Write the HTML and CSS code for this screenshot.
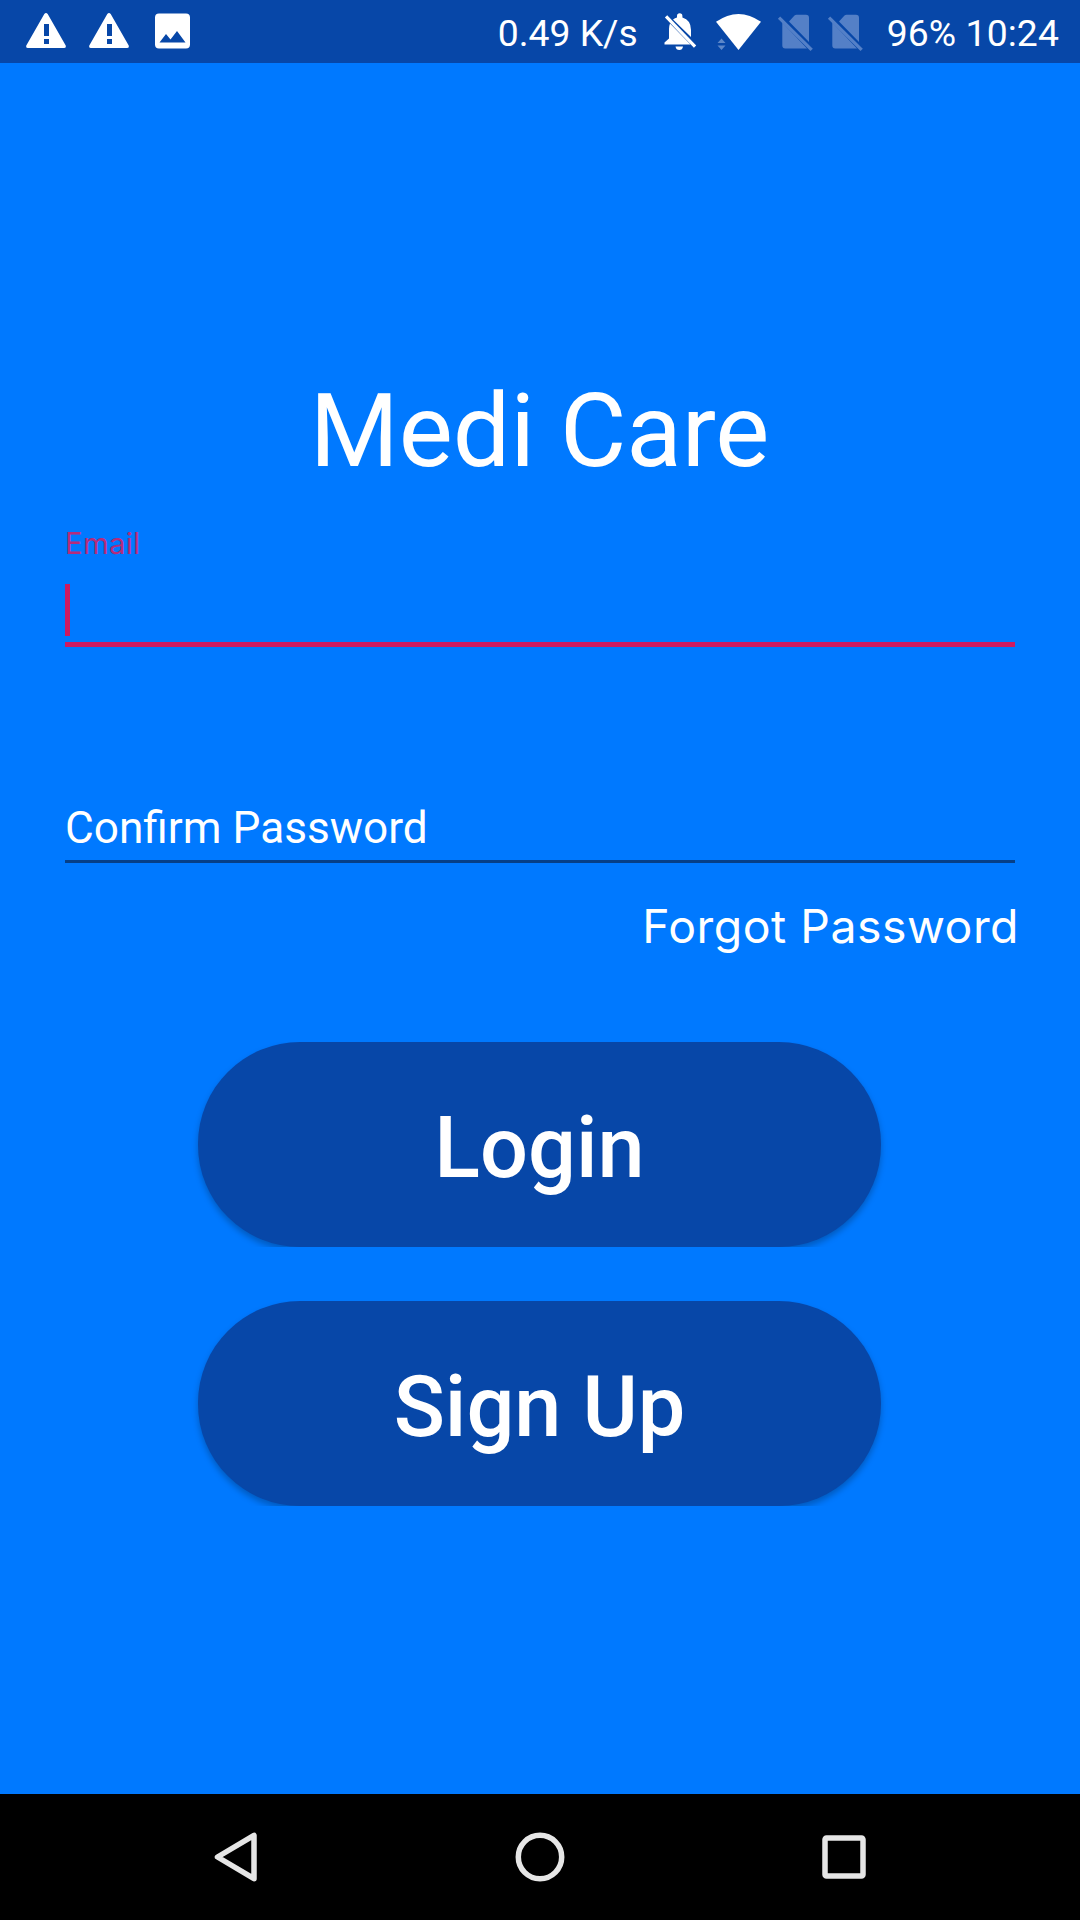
FILE: index.html
```html
<!DOCTYPE html>
<html lang="en">
<head>
<meta charset="utf-8">
<title>Medi Care</title>
<link rel="stylesheet" href="styles.css">
</head>
<body>
<div class="screen">
  <header class="status">
    <div class="notifications">
      <svg width="40" height="36" viewBox="26 13 40 36"><path fill="#fff" fill-rule="evenodd" d="M44.3 14q1.7-2 3.400 0L65.700 45.500q.7 2.500-1.700 2.500H28q-2.400 0-1.700-2.500zM44 24v12h5V24zM44 39v5h5v-5z"/></svg>
      <svg width="40" height="36" viewBox="26 13 40 36"><path fill="#fff" fill-rule="evenodd" d="M44.3 14q1.7-2 3.400 0L65.700 45.500q.7 2.500-1.700 2.500H28q-2.400 0-1.700-2.500zM44 24v12h5V24zM44 39v5h5v-5z"/></svg>
      <svg class="picture" width="36" height="36" viewBox="154 13.500 36 36"><path fill="#fff" fill-rule="evenodd" d="M159 14h27q4 0 4 4v27q0 4-4 4h-27q-4 0-4-4V18q0-4 4-4zM159.500 43H185.500L177 31.500 170.500 40 166 34.500z"/></svg>
    </div>
    <div class="system">
      <span class="speed">0.49 K/s</span>
      <svg class="bell" width="34" height="38" viewBox="663 13 34 38"><g fill="#fff"><path d="M673 19.500Q675 18 677 17.500V16a2.700 2.700 0 0 1 5.400 0v1.500Q691 20 691 30v7zM670 23.500 690.500 44.500H664.500V42.500L669 38.500V29Q669 26 670 23.500zM675.500 46.500h7.500q-.5 3.500-3.700 3.500t-3.800-3.500z"/><path d="m667.200 15.300 29 30.200-2.300 2.300-29-30.200z"/></g></svg>
      <svg class="wifi" width="46" height="38" viewBox="715 13 46 38"><path fill="#fff" d="M716 21.800Q738.500 6 761 21.800L738.500 50z"/><path fill="#5c87c9" d="m721.500 38.500 4 4.500h-8zM717.500 45.500h8l-4 4.500z"/></svg>
      <svg class="sim" width="36" height="38" viewBox="777 14 36 38"><path fill="#5480c7" d="M789 21.500 794.500 15.500Q795.300 14.700 796.500 14.700H806Q809 14.700 809 17.700V42zM782.300 22.500 807 48.500H785.300Q782.300 48.500 782.300 45.500z"/><path fill="#5480c7" d="m780.200 16.500 32.600 32.200-2.300 2.300-32.600-32.200z"/></svg>
      <svg class="sim" width="36" height="38" viewBox="777 14 36 38"><path fill="#5480c7" d="M789 21.500 794.500 15.500Q795.300 14.700 796.500 14.700H806Q809 14.700 809 17.700V42zM782.300 22.500 807 48.500H785.300Q782.300 48.500 782.300 45.500z"/><path fill="#5480c7" d="m780.200 16.500 32.600 32.200-2.300 2.300-32.600-32.200z"/></svg>
      <span class="clock">96% 10:24</span>
    </div>
  </header>
  <main class="content">
    <h1 class="title">Medi Care</h1>
    <div class="field email">
      <label class="label">Email</label>
      <div class="input"><span class="caret"></span></div>
    </div>
    <div class="field password">Confirm Password</div>
    <a class="forgot">Forgot Password</a>
    <div class="actions">
      <button class="button">Login</button>
      <button class="button">Sign Up</button>
    </div>
  </main>
  <nav class="navbar">
    <svg width="60" height="60" viewBox="0 0 60 60"><path d="M48 8.300V51.700L11.500 30z"/></svg>
    <svg width="60" height="60" viewBox="0 0 60 60"><circle cx="30" cy="30" r="21.700"/></svg>
    <svg width="60" height="60" viewBox="0 0 60 60"><rect x="11" y="11" width="38" height="38" rx="1.500"/></svg>
  </nav>
</div>
</body>
</html>
```
FILE: styles.css
```css
* { box-sizing: border-box; }
body { margin: 0; font-family: Roboto, sans-serif; color: #fff; }
.screen { width: 1080px; height: 1920px; display: flex; flex-direction: column; background: #0079ff; overflow: hidden; }
svg { display: block; flex: none; }

.status { height: 63px; flex: none; background: #0747a8; display: flex; justify-content: space-between; padding: 13px 21px 0 26px; }
.notifications { display: flex; gap: 23px; }
.picture { margin-left: 2px; }
.system { display: flex; font-size: 37.300px; line-height: 40px; white-space: nowrap; }
.speed { margin-right: 25px; }
.wifi { margin-left: 18px; margin-right: 16px; }
.sim { margin-top: 1px; margin-right: 14px; }
.clock { margin-left: 10px; letter-spacing: .1px; }

.content { flex: 1; display: flex; flex-direction: column; padding: 308px 65px 0; }
.title { margin: 0; padding-right: 1px; font-size: 102px; line-height: 120px; font-weight: 400; text-align: center; letter-spacing: -.1px; }
.email { margin-top: 32px; height: 124px; border-bottom: 5px solid #ce1a61; }
.label { display: block; font: 29.500px/40px Inter, sans-serif; letter-spacing: .2px; color: #b52c7c; }
.input { padding-top: 21px; }
.caret { display: block; width: 5px; height: 52px; background: #ce1a61; }
.password { margin-top: 155px; height: 61px; font-size: 44.200px; line-height: 52px; border-bottom: 3px solid #063f87; }
.forgot { margin: 34px -4px 0 0; align-self: flex-end; font: 46.400px/58px Inter, sans-serif; letter-spacing: .5px; white-space: nowrap; }
.actions { margin: 87px 1px 0 0; display: flex; flex-direction: column; align-items: center; gap: 54px; }
.button { width: 683px; height: 205px; padding: 8px 0 0; border: 0; border-radius: 102px; background: #0747a8; color: #fff; font: 500 84.600px/100px Roboto, sans-serif; box-shadow: 0 4px 6px rgba(0, 0, 0, .25); clip-path: inset(0 -12px); }

.navbar { height: 126px; flex: none; background: #000; display: flex; align-items: center; justify-content: space-between; padding: 0 206px; }
.navbar svg { fill: none; stroke: #e6e6e6; stroke-width: 5.5; stroke-linejoin: round; }
```
